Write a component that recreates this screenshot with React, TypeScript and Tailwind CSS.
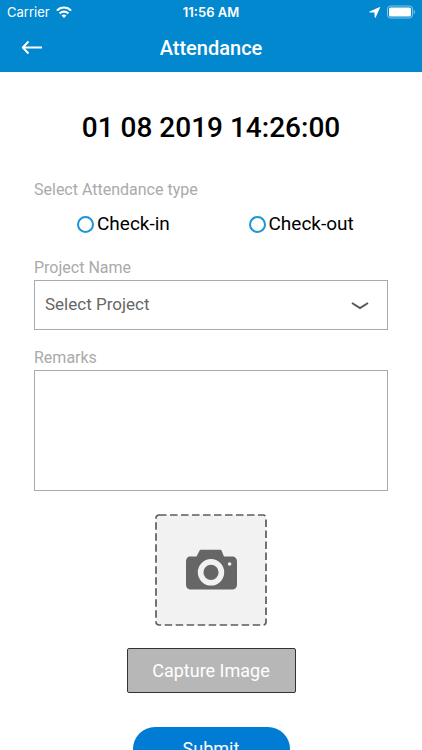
import React, { useState } from 'react';

type AttendanceType = 'check-in' | 'check-out';

interface AttendanceOption {
  id: AttendanceType;
  label: string;
}

const attendanceOptions: AttendanceOption[] = [
  { id: 'check-in', label: 'Check-in' },
  { id: 'check-out', label: 'Check-out' }
];

const StatusBar: React.FC = () => {
  return (
    <div className="grid h-6 grid-cols-3 items-center px-[7px] font-['Inter',sans-serif] text-[13px] leading-6">
      <div className="flex items-center gap-1.5">
        <span>Carrier</span>
        <svg className="h-3 w-4" viewBox="0 0 16 12" fill="none" stroke="currentColor" strokeWidth={2.1}>
          <path d="M0.9 4.6C4.8 0.5 11.2 0.5 15.1 4.6" />
          <path d="M3.6 7.4C6 5 10 5 12.4 7.4" />
          <path d="M8 12L5.5 9.4C6.9 8.1 9.1 8.1 10.5 9.4Z" fill="currentColor" stroke="none" />
        </svg>
      </div>
      <span className="text-center font-semibold">11:56 AM</span>
      <div className="flex items-center justify-end gap-1.5">
        <svg className="h-3 w-3" viewBox="0 0 12 12" fill="currentColor">
          <path d="M11.4 0.8L0.6 5.4C0.3 5.7 0.4 6.4 0.8 6.5L5.5 6.6L5.7 11.2C5.8 11.7 6.4 11.8 6.7 11.4Z" />
        </svg>
        <svg className="h-3.5 w-7" viewBox="0 0 28 14" fill="none">
          <rect x="0.5" y="1" width="25" height="12" rx="3" stroke="currentColor" strokeOpacity="0.5" />
          <rect x="2" y="2.5" width="22" height="9" rx="1.5" fill="currentColor" />
          <path d="M26.8 5V9.2C28.2 8.6 28.2 5.6 26.8 5Z" fill="currentColor" fillOpacity="0.6" />
        </svg>
      </div>
    </div>
  );
};

const Header: React.FC = () => {
  return (
    <header className="shrink-0 bg-[#0288ce] text-white">
      <StatusBar />
      <div className="grid h-12 grid-cols-[40px_1fr_40px] items-center px-3">
        <button type="button" aria-label="Back" className="flex h-10 w-10 items-center justify-center">
          <svg className="h-4 w-6" viewBox="0 0 24 16" fill="none" stroke="currentColor" strokeWidth={2}>
            <path d="M22 7.5H3" />
            <path d="M8.5 1.5L2.8 7.5L8.5 13.5" strokeLinejoin="round" />
          </svg>
        </button>
        <h1 className="text-center text-xl leading-6 font-medium">Attendance</h1>
      </div>
    </header>
  );
};

export default function App() {
  const [type, setType] = useState<AttendanceType | null>(null);
  const [project, setProject] = useState('');
  const [remarks, setRemarks] = useState('');

  return (
    <div className="flex h-screen flex-col bg-white font-['Roboto',sans-serif] text-black">
      <Header />

      <main className="min-h-0 flex-1 overflow-y-auto [scrollbar-width:none]">
        <form className="flex flex-col px-[34px] pt-10 pb-8" onSubmit={(e) => e.preventDefault()}>
          <time dateTime="2019-08-01T14:26:00" className="text-center text-[28px] leading-8 font-medium">
            01 08 2019 14:26:00
          </time>

          {/* Attendance type */}
          <fieldset className="mt-9">
            <legend className="text-base leading-5 text-[#aaaaaa]">Select Attendance type</legend>
            <div className="mt-3 grid grid-cols-2 pl-[43px]">
              {attendanceOptions.map((option) => (
                <label key={option.id} className="flex items-center gap-[3px] text-[19px] leading-6 last:pl-4">
                  <input
                    type="radio"
                    name="attendance-type"
                    value={option.id}
                    checked={type === option.id}
                    onChange={() => setType(option.id)}
                    className="h-[17px] w-[17px] appearance-none rounded-full border-2 border-[#1a96d4] checked:border-[5px]"
                  />
                  {option.label}
                </label>
              ))}
            </div>
          </fieldset>

          {/* Project */}
          <label htmlFor="project" className="mt-5 text-base leading-6 text-[#aaaaaa]">
            Project Name
          </label>
          <div className="relative flex">
            <select
              id="project"
              value={project}
              onChange={(e) => setProject(e.target.value)}
              className="h-[50px] w-full appearance-none border border-[#aaaaaa] bg-white px-2.5 text-[17px] text-[#666666]"
            >
              <option value="">Select Project</option>
            </select>
            <svg
              className="pointer-events-none absolute top-5 right-[18px] h-3 w-5"
              viewBox="0 0 20 12"
              fill="none"
              stroke="#555555"
              strokeWidth={2}
            >
              <path d="M2 3L10 8L18 3" />
            </svg>
          </div>

          {/* Remarks */}
          <label htmlFor="remarks" className="mt-4 text-base leading-6 text-[#aaaaaa]">
            Remarks
          </label>
          <textarea
            id="remarks"
            value={remarks}
            onChange={(e) => setRemarks(e.target.value)}
            className="h-[121px] w-full resize-none border border-[#aaaaaa] p-2.5 text-[17px]"
          />

          {/* Photo */}
          <div className="mt-[23px] flex flex-col items-center">
            <svg className="h-28 w-28" viewBox="0 0 112 112" role="img" aria-label="No photo yet">
              <rect x="1" y="1" width="110" height="110" rx="3" fill="#f2f2f2" stroke="#5c5c5c" strokeWidth="1.7" strokeDasharray="7.5 3.5" />
              <path
                d="M35 42.5H41.5L44.5 36.8C44.9 36 45.4 35.7 46.2 35.7H65C65.8 35.7 66.3 36 66.6 36.8L69 42.5H77C80 42.5 82 44.5 82 47.5V70.5C82 73.5 80 75.5 77 75.5H36C33 75.5 31 73.5 31 70.5V47.5C31 44.5 32.5 42.5 35 42.5Z"
                fill="#666666"
              />
              <circle cx="56" cy="58.3" r="10.4" fill="#666666" stroke="#f2f2f2" strokeWidth="5.6" />
              <circle cx="74.6" cy="50" r="1.8" fill="#f2f2f2" />
            </svg>
            <button
              type="button"
              className="mt-[22px] h-[45px] w-[169px] rounded-xs border border-[#333333] bg-[#b7b7b7] text-lg text-white"
            >
              Capture Image
            </button>
            <button type="submit" className="mt-[34px] h-11 w-[157px] rounded-full bg-[#007cd5] text-lg text-white">
              Submit
            </button>
          </div>
        </form>
      </main>
    </div>
  );
}
